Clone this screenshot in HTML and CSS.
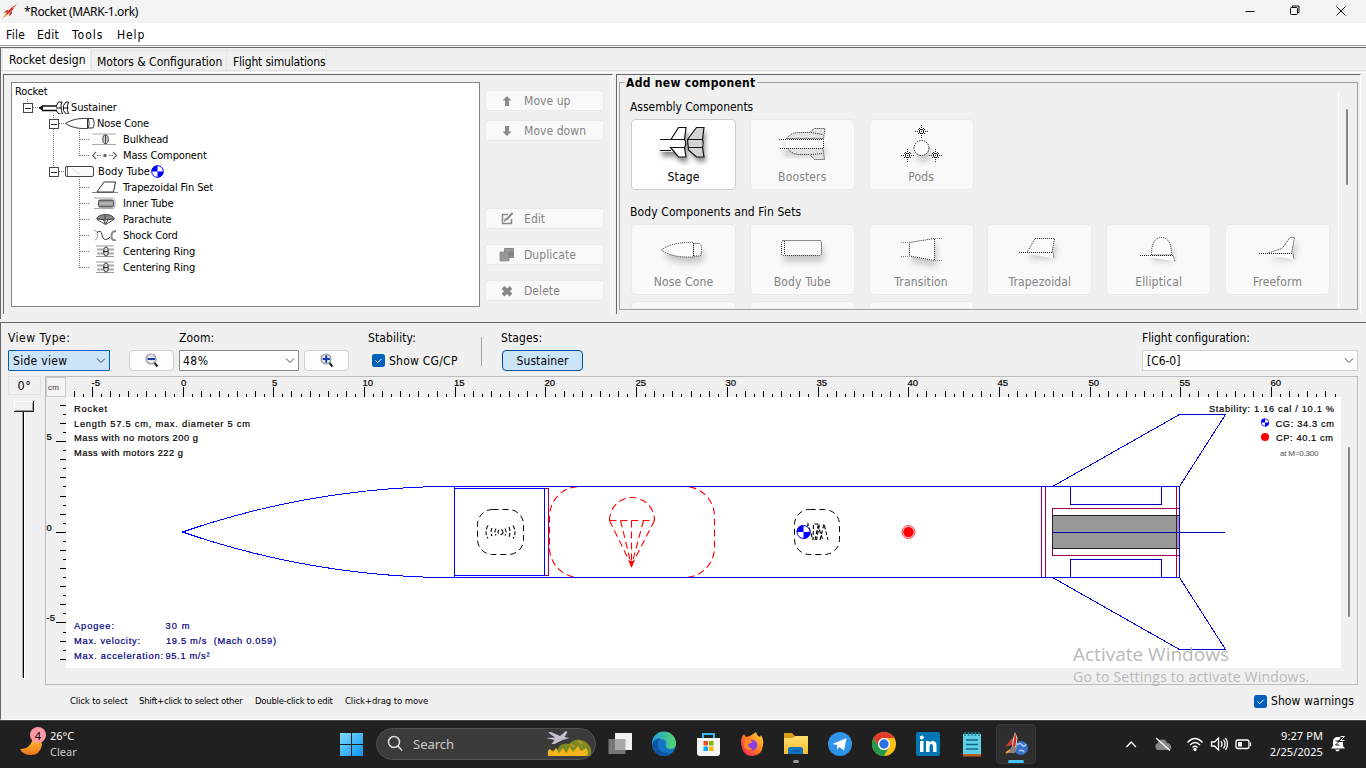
FILE: index.html
```html
<!DOCTYPE html>
<html lang="en">
<head>
<meta charset="utf-8">
<title>*Rocket (MARK-1.ork)</title>
<link rel="stylesheet" href="styles.css">
</head>
<body>
<svg class="defs" width="0" height="0">
  <defs>
    <filter id="soft" x="-30%" y="-30%" width="160%" height="190%"><feDropShadow dx="2" dy="5" stdDeviation="2.5" flood-color="#000" flood-opacity=".45"/></filter>
    <filter id="faint" x="-30%" y="-30%" width="160%" height="220%"><feDropShadow dx="2" dy="6" stdDeviation="3" flood-color="#000" flood-opacity=".2"/></filter>
    <linearGradient id="win" x1="0" y1="0" x2="1" y2="1"><stop offset="0" stop-color="#7fdcff"/><stop offset="1" stop-color="#0a93f2"/></linearGradient>
    <linearGradient id="moon" x1="0" y1="0" x2="0" y2="1"><stop offset="0" stop-color="#fcc62c"/><stop offset="1" stop-color="#f0731c"/></linearGradient>
    <linearGradient id="metal" x1="0" y1="0" x2="0" y2="1"><stop offset="0" stop-color="#777"/><stop offset=".5" stop-color="#bbb"/><stop offset="1" stop-color="#777"/></linearGradient>
    <linearGradient id="edge" x1="0" y1="0" x2="1" y2="0"><stop offset="0" stop-color="#1b9de2"/><stop offset="1" stop-color="#55d96a"/></linearGradient>
    <linearGradient id="fox" x1="1" y1="0" x2="0" y2="1"><stop offset="0" stop-color="#ffe23e"/><stop offset=".5" stop-color="#ff7a22"/><stop offset="1" stop-color="#f31468"/></linearGradient>
    <linearGradient id="folder" x1="0" y1="0" x2="0" y2="1"><stop offset="0" stop-color="#ffdf70"/><stop offset="1" stop-color="#f8bc2c"/></linearGradient>
  </defs>
</svg>

<header class="titlebar">
  <svg class="app-icon" width="16" height="16" viewBox="1 4 16 16"><path d="M16.800 4 11 8 5.500 14l1.200 1.200L12.500 10z" fill="#e0301c"/><path d="M9 9.800 6.500 10.300 3.500 13l4-.8zM12 11v2.500L9 16.500l.5-3.500z" fill="#a8463c"/><path d="M6 13.500 2 18.500l5-3z" fill="#f4a238"/><path d="m13 7.800 1.500-1.300" stroke="#ffd0b0"/></svg>
  <span class="title">*Rocket (MARK-1.ork)</span>
  <svg class="winbtns" width="110" height="23" viewBox="1240 0 110 23" fill="none" stroke="#111"><path d="M1245.500 11.500h9"/><rect x="1290.500" y="7.500" width="7" height="7" rx="1"/><path d="M1292.500 7.500v-1.500h6.500v6.500h-1.500M1336.500 6.500l9 9m0-9-9 9"/></svg>
</header>
<nav class="menubar"><span class="m1">File</span><span class="m2">Edit</span><span class="m3">Tools</span><span class="m4">Help</span></nav>

<main class="top">
  <div class="tabs">
    <div class="tab active">Rocket design</div><div class="tab t2">Motors &amp; Configuration</div><div class="tab t3">Flight simulations</div>
  </div>
  <div class="panes">
    <section class="pane left">
      <div class="tree">
        <svg class="lines" width="110" height="200" viewBox="12 83 110 200" fill="none" stroke="#777" shape-rendering="crispEdges">
          <path stroke-dasharray="1 1" d="M27.500 99v4M33 107.500h6M53.500 115v4M59 123.500h5M53.500 129v38M59 171.500h5M79.500 131v24.500M80 139.500h10M80 155.500h10M79.500 179v89M80 187.500h10M80 203.500h10M80 219.500h10M80 235.500h10M80 251.500h10M80 267.500h10"/>
          <path stroke="#444" fill="#fff" d="M23.500 103.500h9v9h-9zM49.500 119.500h9v9h-9zM49.500 167.500h9v9h-9z"/>
          <path stroke="#222" d="M25 108.500h6M51 124.500h6M51 172.500h6"/>
        </svg>
        <div class="row d0">Rocket</div>
        <div class="row d1"><svg width="32" height="14" viewBox="37 100 32 14" fill="none" stroke="#111"><path d="M38 108l3.500-2v4z" fill="#111"/><path d="M41 106h15M41 110.500h15" stroke-width="1.300"/><path d="M55 108h6M55 106l2.500-4H61l-1 3.500 .5 5 1 3.500h-3.500L55 110.500M67.500 102H65l-2.500 3.500v5L65 114h2.500l-1-3.500v-5zM62.500 108h5"/></svg>Sustainer</div>
        <div class="row d2 n"><svg width="32" height="12" viewBox="63 117 32 12" fill="none" stroke="#333" stroke-width="1"><path d="M64.500 123.500c6-4 14-5.500 22-5v10c-8 .5-16-1-22-5zM87 118.500h5c1.500 3 1.500 7 0 9.500h-5M87 118.500c1.500 3 1.500 7 0 9.500"/></svg>Nose Cone</div>
        <div class="row d3"><svg width="26" height="12" viewBox="92 133 26 12" fill="#ccc" stroke="#444"><path d="M92 134h24M92 144.500h24" stroke="#aaa"/><ellipse cx="105.500" cy="139.300" rx="2.700" ry="4.500"/><path d="M105.500 135v9"/></svg>Bulkhead</div>
        <div class="row d3"><svg width="26" height="12" viewBox="92 149 26 12" fill="none" stroke="#666" stroke-width="1.200"><path d="m96 152-3.500 3.500 3.500 3.500M113 152l3.500 3.500-3.500 3.500"/><path d="M97 155.500h4m8 0h4" stroke-dasharray="1.500 1"/><path d="M103.500 155.500h3" stroke-width="3"/></svg>Mass Component</div>
        <div class="row d2 b"><svg width="31" height="12" viewBox="64 165 31 12" fill="#fafafa" stroke="#444"><rect x="65.500" y="166.500" width="28" height="10" rx="1.500"/><path d="M67.500 167v9" stroke="#777"/><path d="m72 168 8 7" stroke="#ddd"/></svg>Body Tube<svg class="cg" width="13" height="13" viewBox="-6.500 -6.500 13 13"><circle r="5.800" fill="#fff" stroke="#00f"/><path d="M0 0V-6A6 6 0 0 0-6 0zM0 0V6A6 6 0 0 0 6 0z" fill="#00f"/></svg></div>
        <div class="row d3"><svg width="26" height="12" viewBox="92 181 26 12" fill="none" stroke="#333"><path d="M92 192.500h26" stroke="#888"/><path d="m97 192 7-10h11.500l-2 10z"/></svg>Trapezoidal Fin Set</div>
        <div class="row d3"><svg width="26" height="12" viewBox="92 197 26 12" fill="none" stroke="#aaa"><path d="M94 198h19q2 1 2 3v5q0 2-2 2.500H94"/><rect x="98.500" y="200" width="15" height="7" rx="1.500" fill="url(#metal)" stroke="#444"/></svg>Inner Tube</div>
        <div class="row d3"><svg width="26" height="12" viewBox="92 213 26 12" fill="none" stroke="#444"><path d="M96.500 219q2-4.500 9-4.500t9 4.500q-9 1.500-18 0z" fill="#888"/><path d="m97 219.500 8.500 5 8.500-5m-11-.500 2.500 5.500 3-5.500M105 215v9" stroke-width=".9"/></svg>Parachute</div>
        <div class="row d3"><svg width="26" height="12" viewBox="92 229 26 12" fill="none" stroke="#333"><path d="M94 230.500q4 0 3.500 5t-2.500 4.500" stroke="#999"/><path d="M97 232.500q4-3 5 2 .5 5 3.500 5t4.500-2.500"/><path d="M116 231q-4.500 0-4.500 5t4.500 4" stroke="#888" stroke-width="2"/></svg>Shock Cord</div>
        <div class="row d3"><svg width="26" height="12" viewBox="92 245 26 12" fill="#ddd" stroke="#333"><path d="M96 246h18M96 256.500h18" stroke="#999"/><path d="M97 249.500h17M97 253.500h17" stroke-width="2" stroke="#aaa"/><ellipse cx="106" cy="251.500" rx="2.200" ry="4.500"/><path d="M103 251.500h5"/></svg>Centering Ring</div>
        <div class="row d3"><svg width="26" height="12" viewBox="92 245 26 12" fill="#ddd" stroke="#333"><path d="M96 246h18M96 256.500h18" stroke="#999"/><path d="M97 249.500h17M97 253.500h17" stroke-width="2" stroke="#aaa"/><ellipse cx="106" cy="251.500" rx="2.200" ry="4.500"/><path d="M103 251.500h5"/></svg>Centering Ring</div>
      </div>
      <div class="actions">
        <div class="act"><svg width="16" height="16"><path d="m8 3 4.500 4.500H10V13H6V7.500H3.500z" fill="#8c8c8c"/></svg>Move up</div>
        <div class="act a2"><svg width="16" height="16"><path d="M8 13 3.500 8.500H6V3h4v5.500h2.500z" fill="#8c8c8c"/></svg>Move down</div>
        <div class="act a3"><svg width="16" height="16" fill="none" stroke="#8c8c8c" stroke-width="1.500"><path d="M9 3.500H3.500v9h9V8M5.500 10.500l1-3"/><path d="m7 9 6.500-7" stroke-width="2.200"/></svg>Edit</div>
        <div class="act a4"><svg width="16" height="16"><path d="M5.500 1.500h9v9h-9z" fill="#999" stroke="#888"/><path d="M1 5h9v9H1z" fill="#999" stroke="#888" stroke-width=".7"/><path d="M8.500 7h6M11 4.500v5M13 4.500v5" stroke="#777"/></svg>Duplicate</div>
        <div class="act a5"><svg width="16" height="16"><path d="m4 4.500 8 7.500m0-7.500L4 12" stroke="#858585" stroke-width="3.800"/></svg>Delete</div>
      </div>
    </section>
    <section class="pane right">
      <fieldset class="components">
        <legend><span>Add new component</span></legend>
        <div class="scroller">
          <h3>Assembly Components</h3>
          <div class="grid">
            <div class="comp on"><svg width="103" height="46" viewBox="632 120 103 46" fill="#fff" stroke="#111" stroke-width="1.200"><g filter="url(#soft)"><path d="M660 139.500h11l7.500-12h7.500l-1.500 12q2.500 4 0 8l1.500 9.500h-7.500l-4.500-5.500H660" stroke="none"/><path d="M702 139.500l-13.500 0 8-12h7.500l-1.500 12q1 4 0 8l1.500 9.500h-7l-8-7.500-1-10z" fill="#d4d4d4" stroke="none"/></g><path d="M660 139.500h11l7.500-12h7.500l-1.500 12q2.500 4 0 8l1.500 9.500h-7.500l-8-9.500h14.500M660 150.500h11" fill="none"/><path d="m687.500 139.500 9-12h7.500l-1.500 12q1.500 4 0 8l1.500 9.500h-7.500l-8-7zM688 147.500h14.500" fill="#d4d4d4"/><path d="M688 139.500h14.500M671 139.500h13.500"/></svg>Stage</div>
            <div class="comp"><svg width="103" height="46" viewBox="751 120 103 46" fill="none" stroke="#222" stroke-dasharray="1 1"><path filter="url(#faint)" stroke="none" fill="#eee" d="M782 141h41v9h-41z"/><path fill="#e2e2e2" d="M786.500 138.500q5-6 12-6h11l5-4h10.500l-1.500 10zM787.500 148.500q5 6 12 6h10l5 5h10l-1.500-11z"/><path fill="#fafafa" stroke="none" d="M786 139h37v9h-37z"/><path d="M779 139.500h44.500v9H779M811 132.500l12 2M811 154.500l12-1"/></svg>Boosters</div>
            <div class="comp"><svg width="103" height="46" viewBox="870 120 103 46" fill="none" stroke="#222"><circle cx="921.500" cy="148" r="7.500" stroke-dasharray="1.500 1" fill="#fcfcfc" filter="url(#faint)"/><path stroke-dasharray="1 1" stroke-width="1" d="M915 131.500h13M921.500 125v13M919.500 128v6M923.500 128v6M918 129.500h7M918 133.500h7M901 155.500h13M907.500 149v13M905.500 152v6M909.500 152v6M904 153.500h7M904 157.500h7M929 155.500h13M935.500 149v13M933.500 152v6M937.500 152v6M932 153.500h7M932 157.500h7"/></svg>Pods</div>
          </div>
          <h3 class="wide">Body Components and Fin Sets</h3>
          <div class="grid">
            <div class="comp"><svg width="103" height="46" viewBox="632 225 103 46" fill="#fcfcfc" stroke="#222" stroke-dasharray="1 1"><g filter="url(#faint)"><path d="M661.500 250q10-8 32-7.500v14.500q-22 1-32-7zM693.500 243.500h6q2 1 2 6.500t-2 6h-6z"/></g></svg>Nose Cone</div>
            <div class="comp"><svg width="103" height="46" viewBox="751 225 103 46" fill="#f9f9f9" stroke="#222" stroke-dasharray="1 1"><g filter="url(#faint)"><rect x="781.500" y="240.500" width="40" height="15" rx="2"/><path d="M784.500 241v14"/></g></svg>Body Tube</div>
            <div class="comp"><svg width="103" height="46" viewBox="870 225 103 46" fill="#fcfcfc" stroke="#222" stroke-dasharray="1 1"><g filter="url(#faint)"><path d="M909.500 242.500l25-4v22l-25-4.500z"/></g><path d="M901 242.500h8M901 256.500h8M935 238.500h8M935 260.500h8" stroke="#888"/></svg>Transition</div>
            <div class="comp"><svg width="103" height="46" viewBox="989 225 103 46" fill="#fcfcfc" stroke="#222" stroke-dasharray="1 1"><g filter="url(#faint)"><path d="m1028 252.500 8-14h19.500l-2.500 14z"/></g><path d="M1020 252.500h34l1 6"/></svg>Trapezoidal</div>
            <div class="comp"><svg width="103" height="46" viewBox="1107 225 103 46" fill="#fcfcfc" stroke="#222" stroke-dasharray="1 1"><g filter="url(#faint)"><path d="M1151.500 255q0-17.500 10-17.500t10 17.500z"/></g><path d="M1140 255.500h33l2 6"/></svg>Elliptical</div>
            <div class="comp"><svg width="103" height="46" viewBox="1226 225 103 46" fill="#fcfcfc" stroke="#222" stroke-dasharray="1 1"><g filter="url(#faint)"><path d="m1267 253.500 15-5 8-11h4.500l-3 16z"/></g><path d="M1259 253.500h34l1 6"/></svg>Freeform</div>
          </div>
          <div class="grid third"><div class="comp"></div><div class="comp"></div><div class="comp"></div></div>
        </div>
        <div class="vbar"><i></i></div>
      </fieldset>
    </section>
  </div>
</main>

<section class="bottom">
  <div class="controls">
    <div class="ctl c1"><label>View Type:</label><div class="combo blue">Side view<svg width="10" height="6"><path d="m1 .5 4 4 4-4" fill="none" stroke="#444"/></svg></div></div>
    <div class="ctl zoomout"><div class="btn"><svg width="17" height="16" viewBox="0 0 17 16" fill="none"><circle cx="8" cy="6" r="5" fill="#e4e6ea" stroke="#999" stroke-width="1.200"/><path d="m11.500 10 3 3.500" stroke="#222" stroke-width="2"/><path d="M4.500 6h7.500" stroke="#1a3cae" stroke-width="2"/></svg></div></div>
    <div class="ctl c2"><label>Zoom:</label><div class="combo dark">48%<svg width="10" height="6"><path d="m1 .5 4 4 4-4" fill="none" stroke="#444"/></svg></div></div>
    <div class="ctl zoomin"><div class="btn"><svg width="17" height="16" viewBox="0 0 17 16" fill="none"><circle cx="8" cy="6" r="5" fill="#e4e6ea" stroke="#999" stroke-width="1.200"/><path d="m11.500 10 3 3.500" stroke="#222" stroke-width="2"/><path d="M4.500 6h7.500M8.200 2.300v7.500" stroke="#1a3cae" stroke-width="2"/></svg></div></div>
    <div class="ctl c3"><label>Stability:</label><div class="check"><svg width="13" height="13"><rect width="13" height="13" rx="2.500" fill="#005fb8"/><path d="m3.500 6.500 2.200 2.200 4-4" fill="none" stroke="#fff"/></svg>Show CG/CP</div></div>
    <div class="sep"></div>
    <div class="ctl c4"><label>Stages:</label><div class="btn stage">Sustainer</div></div>
    <div class="ctl c5"><label>Flight configuration:</label><div class="combo light">[C6-0]<svg width="10" height="6"><path d="m1 .5 4 4 4-4" fill="none" stroke="#444"/></svg></div></div>
  </div>
  <div class="work">
    <div class="rotation"><div class="deg">0°</div>
      <svg width="33" height="282" viewBox="8 397 33 282" shape-rendering="crispEdges"><path d="M22 411h1v266h-1z" fill="#a0a0a0"/><path d="M23 411h1v267h-1z" fill="#000"/><path d="M24 411h1v268h-1z" fill="#fff"/><path d="M14.500 401.500h19v10h-19z" fill="#f0f0f0" stroke="#fff"/><path d="M14 411.500h20M33.500 401v11" stroke="#222"/><path d="M15 410.500h18M32.500 402v8" stroke="#a0a0a0"/></svg>
    </div>
    <svg class="canvas" width="1313" height="309" viewBox="45 376 1313 309">
      <rect x="66" y="397" width="1275" height="271" fill="#fff"/>
      <g shape-rendering="crispEdges" stroke="#000" fill="none">
        <path stroke="#ccc" fill="#f4f4f4" d="M46.500 377.500h19v19h-19z"/>
        <path stroke="#bbb" d="M45.500 376.500h1312v308h-1312z"/>
        <path d="M82.870 395.500H1336" stroke-width="3" stroke-dasharray="1 17.140"/>
        <path d="M73.800 394H1330" stroke-width="6" stroke-dasharray="1 17.140"/>
        <path d="M91.940 392H1280" stroke-width="10" stroke-dasharray="1 89.700"/>
        <path d="M64.500 413.870V660" stroke-width="3" stroke-dasharray="1 17.140"/>
        <path d="M63 404.800V660" stroke-width="6" stroke-dasharray="1 17.140"/>
        <path d="M61 441.080V640" stroke-width="10" stroke-dasharray="1 89.700"/>
      </g>
      <g class="ruler">
        <text x="91.500" y="386">-5</text><text x="181" y="386">0</text><text x="272" y="386">5</text><text x="362.500" y="386">10</text><text x="454" y="386">15</text><text x="544.500" y="386">20</text><text x="635.500" y="386">25</text><text x="725.500" y="386">30</text><text x="816.500" y="386">35</text><text x="907.500" y="386">40</text><text x="997.500" y="386">45</text><text x="1088.500" y="386">50</text><text x="1179.500" y="386">55</text><text x="1270.500" y="386">60</text>
        <text x="46.500" y="440">5</text><text x="46.500" y="531">0</text><text x="46.500" y="621">-5</text>
        <text class="cm" x="48" y="390" textLength="11">cm</text>
      </g>
      <g fill="none" stroke="#f00" stroke-width="1.100" stroke-dasharray="7 4">
        <rect x="549.500" y="486.500" width="165" height="91" rx="30"/>
        <path d="M609.500 520.500a22.500 23 0 0 1 45 0M609.500 520.500h45M609.500 520.500l22 45M620.500 520.500l11 45M631.500 520.500v45M643.500 520.500l-12 45M654.500 520.500l-23 45"/>
        <path d="M629.500 561.500h4l-2 5z" fill="#f00" stroke-dasharray="none"/>
      </g>
      <g fill="none" stroke="#00f" shape-rendering="crispEdges">
        <path stroke="#a0005a" d="M544 488.500h4.500v87H544M1041.500 487v90M1045.500 487v90M1176.500 487v90M1052.500 508.500h127M1052.500 508v48M1052.500 555.500h127"/>
        <path d="M1052.500 515.500h127v33h-127z" fill="#999" stroke="#222"/>
        <path d="M1176.500 516v32" stroke="#5a0a3c"/>
        <path d="M1052 532.500h173" stroke="#0000a8"/>
        <path stroke="#0000c8" d="M1070.500 487v17.500h91V487M1070.500 577v-17.500h91V577"/>
        <path d="M454 488.500h90.500v87H454M454.500 486v92M430 486.500h750M430 577.500h750M1179.500 486v92"/>
        <path d="M182.500 532A836 836 0 0 1 430 486.700M182.500 532A836 836 0 0 0 430 577.300"/>
        <path stroke="#0000e0" d="M1052.500 486.500l127-72h46l-46 72M1052.500 577.500l127 72h46l-46-72"/>
      </g>
      <g fill="none" stroke="#000" stroke-dasharray="6 4">
        <rect x="477.500" y="509.500" width="46" height="45" rx="15"/><rect x="794.500" y="509.500" width="45" height="45" rx="15"/>
      </g>
      <g fill="none" stroke="#000" stroke-width="1.100" stroke-dasharray="4 2">
        <circle cx="500.500" cy="532" r="2.500"/><path d="M496 528.500q-2 3.500 0 7M492 528q-2 4 0 8M488 525.500q-4 6.500 0 13M505 528.500q2 3.500 0 7M509 527q2 5 0 10M513 525.500q4 6.500 0 13"/>
        <path d="M805 538l3-14 5 16 .500-16 6 0-3 16M815 540l3-14 5 14M820 540l4-16 4 16"/>
      </g>
      <g fill="#00f"><circle cx="803.500" cy="532" r="6.500" fill="#fff" stroke="#00f"/><path d="M803.500 532v-7a7 7 0 0 0-7 7zM803.500 532v7a7 7 0 0 0 7-7z"/>
      <circle cx="1265" cy="422.500" r="3.700" fill="#fff" stroke="#00f" stroke-width=".8"/><path d="M1265 422.500v-4a4 4 0 0 0-4 4zM1265 422.500v4a4 4 0 0 0 4-4z"/></g>
      <circle cx="908.500" cy="532" r="6.500" fill="#fff" stroke="#f00" stroke-width=".8"/><circle cx="908.500" cy="532" r="5.300" fill="#f00"/><circle cx="1265" cy="437" r="4" fill="#f00"/>
      <g class="info">
        <text x="74" y="412" textLength="33">Rocket</text><text x="74" y="427" textLength="176">Length 57.5 cm, max. diameter 5 cm</text><text x="74" y="441" textLength="124">Mass with no motors 200 g</text><text x="74" y="456" textLength="109">Mass with motors 222 g</text>
        <text x="1209" y="412" textLength="125">Stability: 1.16 cal / 10.1 %</text><text x="1275.500" y="427" textLength="58.500">CG: 34.3 cm</text><text x="1276" y="441" textLength="57">CP: 40.1 cm</text>
        <text class="mach" x="1280" y="456" textLength="38.500">at M=0.300</text>
      </g>
      <g class="info flight">
        <text x="74" y="629" textLength="40">Apogee:</text><text x="165.500" y="629" textLength="24">30 m</text><text x="74" y="644" textLength="66">Max. velocity:</text><text x="166" y="644" textLength="110">19.5 m/s&#160; (Mach 0.059)</text><text x="74" y="659" textLength="89">Max. acceleration:</text><text x="165.500" y="659" textLength="44">95.1 m/s²</text>
      </g>
      <path d="M1349 448v168" stroke="#868686" stroke-width="2" stroke-linecap="round"/>
    </svg>
  </div>
  <div class="footer">
    <span class="h1">Click to select</span><span class="h2">Shift+click to select other</span><span class="h3">Double-click to edit</span><span class="h4">Click+drag to move</span>
    <div class="check warn"><svg width="13" height="13"><rect width="13" height="13" rx="2.500" fill="#005fb8"/><path d="m3.500 6.500 2.200 2.200 4-4" fill="none" stroke="#fff"/></svg>Show warnings</div>
  </div>
</section>
<div class="watermark"><div class="w1">Activate Windows</div><div class="w2">Go to Settings to activate Windows.</div></div>

<footer class="taskbar">
  <div class="weather">
    <svg width="30" height="34" viewBox="18 724 30 34"><path d="M20 748q10 1 13-11 9 0 9 7-2 10-11 10-8 0-11-6z" fill="url(#moon)"/><circle cx="38" cy="734" r="8" fill="#ff99a4"/><text x="38" y="738.500" text-anchor="middle">4</text></svg>
    <div class="wt"><div>26°C</div><div class="dim">Clear</div></div>
  </div>
  <svg class="start" width="23" height="23"><path d="M0 0h11v11H0zM12 0h11v11H12zM0 12h11v11H0zM12 12h11v11H12z" fill="url(#win)"/></svg>
  <div class="search">
    <svg width="17" height="17" fill="none" stroke="#ddd" stroke-width="1.500"><circle cx="7" cy="7" r="5.500"/><path d="m11 11 4 4.500"/></svg><span>Search</span>
    <svg class="art" width="48" height="28" viewBox="545 731 48 28"><path d="M548 757q0-7 9-6 4-8 12-6 8-8 17-2 8 7 4 14z" fill="#7b8b22"/><path d="M548 757q-1-6 2-7l3 3 3-4 3 5 4-5 3 5 4-6 3 5 5-6 3 5 5-3q3 4 1 8z" fill="#f2b41c"/><path d="m570 745 5 3M578 742l5 3" stroke="#b8962c" stroke-width="2"/><path d="m546 739 9-.500-7-5 3-.500 9 4 6-5 1.500 1-3 5 5 1-7 2-8 4h-3l3-4z" fill="#c9bfd2"/></svg>
  </div>
  <svg class="apps" width="440" height="48" viewBox="600 720 440 48">
    <path d="M608.500 739h17v15h-17z" fill="#777"/><path d="M615 733h17v17h-17z" fill="#f0f0f0"/><path d="M615 739h10.500v11H615z" fill="#a8a8a8"/>
    <circle cx="664" cy="744" r="12" fill="#1474c4"/><path d="M652 744a12 12 0 0 1 24-1q0 6-6 6-5 0-4-4 1-6-5-6t-9 5z" fill="url(#edge)"/><path d="M652.500 747q-1-8 8-9-4 4-2 10t12 5q-5 4-10 2.500-6-2-8-8.500z" fill="#0e56a0"/>
    <path d="M697 738h23v15q0 3-3 3h-17q-3 0-3-3z" fill="#f4f4f4"/><path d="M703 738v-4h11v4" fill="none" stroke="#2fbdf2" stroke-width="2"/><path d="M703.500 741h4.500v4.500h-4.500z" fill="#f25022"/><path d="M709 741h4.500v4.500H709z" fill="#7fba00"/><path d="M703.500 746.500h4.500v4.500h-4.500z" fill="#00a4ef"/><path d="M709 746.500h4.500v4.500H709z" fill="#ffb900"/>
    <path d="M741 742q0-5 3-8l2 3 4-1 6-4q1 4 4 5l1-2q3 5 2 10-1 11-11 11t-11-14z" fill="url(#fox)"/><circle cx="752" cy="745" r="5.200" fill="#8a3ce0"/><path d="M745 740q4-2 8 2l-5 2q0 4 5 5-7 3-9-3z" fill="#ff8a1f"/>
    <path d="M784 733h8l3 3h13v8h-24z" fill="#d99a1a"/><path d="M784 738h9l3-2h12v18h-24z" fill="url(#folder)"/><path d="M788 754v-5q0-2 2-2h11q2 0 2 2v5z" fill="#1272c4"/><path d="M793 751h7" stroke="#0c4f94"/><rect x="793" y="760" width="6" height="3" rx="1.500" fill="#9a9a9a"/>
    <circle cx="840" cy="744" r="12" fill="#2f93ea"/><path d="m832.500 744 14-6-2.500 12.500-4.500-3.500-2.500 2.500v-4.500z" fill="#fff"/>
    <circle cx="884" cy="744" r="12" fill="#fbc116"/><path d="M873.600 738a12 12 0 0 1 20.800 0H884a6 6 0 0 0-5.200 9z" fill="#e33b2e"/><path d="M873.600 738a12 12 0 0 0 10.400 18l5.200-9a6 6 0 0 1-10.400 0z" fill="#239a4b"/><circle cx="884" cy="744" r="6" fill="#fff"/><circle cx="884" cy="744" r="4.700" fill="#2a72e8"/>
    <rect x="916" y="732" width="24" height="24" rx="2" fill="#0077b5"/><path d="M920 741h3.500v11H920zM926 741h3.300v1.500q4-3.500 6.500 0 .7 1 .7 3V752H933v-5q0-3-1.700-3t-1.800 3v5H926z" fill="#fff"/><circle cx="921.800" cy="737.500" r="2" fill="#fff"/>
    <path d="M963 734h18v21h-18z" fill="#5fd0e6"/><path d="M963 754h18v2.500h-18z" fill="#c05c20"/><path d="M966 740h12M966 744.500h12M966 749h12" stroke="#0f6a86" stroke-width="1.600"/><path d="M965 732v4M968.500 732v4M972 732v4M975.500 732v4M979 732v4" stroke="#1b88a4" stroke-width="1.500"/>
    <rect x="996.500" y="724.500" width="39" height="39" rx="4" fill="#2e2e2e" stroke="#383838"/><circle cx="1021" cy="748" r="7" fill="#3a70c8"/><path d="M1017 745q3-3 5 0t4-1M1019 751q3-2 5 1" stroke="#a9cdf5" fill="none" stroke-width="1.500"/><path d="m1015 732 2.500 6-1.500 11h-4l.500-9z" fill="#e8d8d8"/><path d="m1015 732 1.500 7-1.500 9-2-2z" fill="#c8281f"/><path d="m1012 738-7 9 7-2z" fill="#c63a36"/><path d="M1012 746l-4 7h7l2-5z" fill="#8a8080"/><path d="m1006 753 4-3" stroke="#f5a52c" stroke-width="2"/><rect x="1008" y="760" width="16" height="3" rx="1.500" fill="#4cc2ff"/>
  </svg>
  <svg class="tray" width="150" height="48" viewBox="1120 720 150 48" fill="none" stroke="#fff" stroke-width="1.300">
    <path d="m1126.500 747 4.700-5 4.700 5"/>
    <path d="M1158 750h11q3-1 2-4t-4-3q-1-4-5-3.500t-4 3.500q-3 1-2.500 4 .500 3 2.500 3z" fill="#888" stroke="none"/><path d="m1156 738 14 12.500"/>
    <path d="M1187.500 742.500q7.500-8 15 0M1190 745q5-5 10 0M1192.500 747.500q2.500-2.500 5 0"/><circle cx="1195" cy="749.500" r="1" fill="#fff"/>
    <path d="M1211.500 742h3l4-4v12l-4-4h-3zM1221 741q2 3 0 6M1223.500 739.500q3 4.500 0 9M1225.500 738q4 6 0 12"/>
    <rect x="1236" y="740" width="13" height="8.500" rx="2"/><path d="M1238 742h4v4.500h-4z" fill="#fff" stroke="none"/><path d="M1250.500 742.500v3.500"/>
  </svg>
  <div class="clock"><div>9:27 PM</div><div>2/25/2025</div></div>
  <svg class="bell" width="16" height="18" viewBox="1330 735 16 18"><path d="M1331 748.500l2-2.500v-4q0-5 5-5t5 5v4l2 2.500zM1335 749.500q2.500 4 5 0z" fill="#fff"/><path d="M1335.500 741h4l-4 4h4" stroke="#202020" fill="none"/><path d="M1340.500 736h4l-4 4.500h4" stroke="#202020" stroke-width="3" fill="none"/><path d="M1340.500 736.500h4l-4 4h4" stroke="#fff" fill="none"/></svg>
</footer>
</body>
</html>
```
FILE: styles.css
```css
* { box-sizing: border-box; }
body { margin: 0; width: 1366px; height: 768px; overflow: hidden; display: flex; flex-direction: column; position: relative; background: #f0f0f0; color: #000; font: 12px/16px "DejaVu Sans Condensed", "Noto Sans", sans-serif; white-space: nowrap; }
svg { display: block; flex: none; }
.defs { position: absolute; }
.titlebar { height: 23px; background: #f3f3f3; display: flex; align-items: center; padding-left: 1px; font: 12px/22px "Noto Sans", sans-serif; }
.title { margin-left: 7px; letter-spacing: -.35px; }
.winbtns { margin-left: auto; margin-right: 16px; }
.menubar { height: 23px; background: #fff; border-bottom: 1px solid #a0a0a0; display: flex; line-height: 25px; padding-left: 6px; letter-spacing: .3px; }
.menubar span { flex: none; }
.m1 { width: 31px; } .m2 { width: 35px; } .m3 { width: 45px; letter-spacing: 1px; } .m4 { letter-spacing: .9px; }
.top { height: 272px; margin-top: 1px; border-top: 1px solid #696969; border-left: 1px solid #696969; display: flex; flex-direction: column; }
.tabs { display: flex; height: 23px; align-items: flex-end; padding-left: 1px; border-bottom: 1px solid #e3e3e3; }
.tab { height: 20px; border: 1px solid #e5e5e5; border-bottom: 0; line-height: 22px; padding-left: 5px; background: #f0f0f0; }
.tab.active { height: 22px; width: 89px; background: #f9f9f9; padding-left: 6px; letter-spacing: .1px; }
.t2 { width: 136px; } .t3 { width: 100px; border-left: 0; padding-left: 6px; letter-spacing: -.17px; }
.panes { display: flex; height: 248px; padding: 3px 0 0 2px; background: linear-gradient(#fff, #fff) 0 1px / 100% 1px no-repeat; }
.pane { height: 240px; border-left: 1px solid #696969; border-top: 1px solid #696969; display: flex; background: #f0f0f0; }
.left { width: 610px; padding: 7px 0 0 7px; border-right: 1px solid #fff; }
.right { width: 745px; margin-left: 3px; padding: 0 0 0 2px; border-right: 1px solid #fff; }
.tree { position: relative; width: 469px; height: 225px; padding-top: 1px; background: #fff; border: 1px solid #828790; font-size: 11px; letter-spacing: -.13px; }
.lines { position: absolute; left: 0; top: 0; }
.row { height: 16px; display: flex; align-items: center; position: relative; }
.row svg { margin-top: -2px; }
.d0 { padding-left: 3px; } .d1 { padding-left: 26px; gap: 1px; } .d2 { padding-left: 52px; gap: 1px; } .d3 { padding-left: 80px; gap: 5px; }
.b { gap: 3px; letter-spacing: .1px; }
.row .cg { margin-left: -2px; }
.actions { margin-left: 5px; padding-top: 8px; display: flex; flex-direction: column; }
.act { width: 119px; height: 21px; border: 1px solid #e9e9e9; border-radius: 3px; background: #f9f9f9; color: #838383; display: flex; align-items: center; padding-left: 13px; gap: 9px; letter-spacing: .06px; }
.a2 { margin-top: 9px; } .a3 { margin-top: 67px; } .a4, .a5 { margin-top: 15px; }
.components { margin: -1px 0 0; width: 739px; height: 236px; min-width: 0; padding: 0; border: 1px solid #a0a0a0; position: relative; display: flex; }
legend { font-weight: bold; padding: 0 2px; margin-left: 4px; line-height: 16px; height: 16px; letter-spacing: .3px; }
legend span { display: block; padding-top: 1px; }
.scroller { width: 719px; height: 216px; overflow: hidden; border-right: 1px solid #fff; padding-left: 11px; margin-top: 2px; }
h3 { font: inherit; margin: 6px 0 3px -1px; line-height: 18px; height: 18px; letter-spacing: -.03px; }
.grid { display: flex; gap: 13.800px; margin-bottom: 12px; }
.grid + h3 { margin: 13px 0 3px -1px; letter-spacing: .11px; }
.grid:has(+ h3) { margin-bottom: 0; }
.comp { width: 105px; height: 71px; flex: none; border: 1px solid #e9e9e9; border-radius: 4px; background: #f9f9f9; color: #838383; text-align: center; line-height: 22px; letter-spacing: .15px; }
.comp.on { background: #fefefe; border-color: #ccc; color: #000; }
.third { margin-top: -6px; }
.vbar { padding: 19px 0 0 7px; }
.vbar i { display: block; width: 2px; height: 76px; background: #868686; border-radius: 1px; }
.bottom { height: 398px; margin-top: 3px; border-top: 1px solid #696969; border-left: 1px solid #696969; border-bottom: 1px solid #fff; display: flex; flex-direction: column; padding: 6px 0 0 7px; }
.controls { height: 47px; display: flex; letter-spacing: .1px; }
.ctl { display: flex; flex-direction: column; justify-content: flex-end; height: 42px; gap: 5px; }
label { height: 16px; line-height: 18px; }
.c1 label { letter-spacing: .5px; }
.combo { height: 21px; border: 1px solid #888; background: #fff; display: flex; align-items: center; justify-content: space-between; padding: 0 4px; border-radius: 1px; }
.combo.blue { width: 102px; background: #cce4f7; border-color: #005fb8; padding-right: 3px; letter-spacing: .3px; }
.combo.dark { width: 120px; padding: 0 3px; letter-spacing: .5px; } .combo.light { width: 216px; border-color: #d0d0d0; background: #fdfdfd; padding-right: 3px; }
.btn { width: 45px; height: 21px; border: 1px solid #d0d0d0; border-radius: 4px; background: #fdfdfd; display: flex; align-items: center; justify-content: center; }
.zoomout { margin-left: 19px; } .c2 { margin-left: 5px; } .zoomin { margin-left: 5px; }
.c3 { margin-left: 19px; width: 113px; }
.check { display: flex; align-items: center; gap: 4px; height: 21px; padding-left: 4px; letter-spacing: .25px; }
.sep { width: 1px; height: 29px; margin-top: 8px; background: #a0a0a0; }
.c4 { margin-left: 19px; } .stage { width: 81px; background: #cce4f7; border-color: #0053a0; margin-left: 1px; }
.c5 { margin-left: auto; margin-right: 8px; letter-spacing: -.05px; }
.work { display: flex; height: 309px; }
.rotation { width: 33px; margin-right: 4px; }
.deg { height: 19px; border: 1px solid #e0e0e0; text-align: center; margin-bottom: 2px; line-height: 18px; font-size: 12.500px; letter-spacing: .5px; }
.ruler { font: 9.500px "Liberation Sans", sans-serif; }
.ruler text, .info text { stroke: #000; stroke-width: .2px; }
.ruler .cm { font-size: 8px; fill: #333; stroke: none; }
.info { font: 9.300px "Liberation Sans", sans-serif; }
.flight { fill: #000080; }
.flight text { stroke: #000080; }
.info .mach { font-size: 8px; fill: #777; stroke: #777; }
.footer { display: flex; align-items: center; height: 32px; font-size: 9.500px; padding-left: 62px; }
.footer span { flex: none; }
.h1 { width: 69px; letter-spacing: -.14px; } .h2 { width: 116px; letter-spacing: -.26px; } .h3 { width: 90px; letter-spacing: -.26px; } .h4 { letter-spacing: -.1px; }
.warn { margin-left: auto; margin-right: 12px; font-size: 12px; letter-spacing: .13px; }
.watermark { position: absolute; left: 1073px; top: 641px; color: #b9b9b9; font-family: "Open Sans", "Noto Sans", sans-serif; }
.w1 { font-size: 19px; line-height: 26px; } .w2 { font-size: 14px; line-height: 19px; letter-spacing: .2px; }
.taskbar { height: 48px; background: #202020; border-top: 1px solid #454545; display: flex; align-items: center; color: #fff; font: 11px/16px "Noto Sans", sans-serif; padding-left: 18px; }
.taskbar svg { overflow: visible; margin-top: -1px; }
.weather { display: flex; width: 322px; gap: 2px; align-items: center; }
.wt { margin-top: -1px; }
.weather svg { margin-top: -6px; } .weather text { font-size: 11px; }
.dim { color: #ccc; }
.search { width: 220px; height: 32px; margin: -1px 0 0 13px; border: 1px solid #505050; border-radius: 16px; background: #3b3b3b; display: flex; align-items: center; padding-left: 10px; color: #ccc; font-size: 13px; }
.search span { margin-left: 9px; }
.search .art { margin-left: auto; margin-right: 2px; }
.taskbar .apps { margin-left: 4px; } .taskbar .tray { margin-left: 80px; }
.clock { width: 53px; text-align: right; display: flex; flex-direction: column; align-items: flex-end; margin-top: -1px; letter-spacing: .1px; }
.taskbar .bell { margin-left: 7px; }
```
